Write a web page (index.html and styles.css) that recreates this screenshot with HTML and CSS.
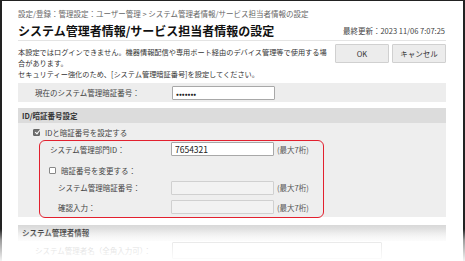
FILE: index.html
```html
<!DOCTYPE html>
<html lang="ja">
<head>
    <meta charset="UTF-8">
    <title>システム管理者情報/サービス担当者情報の設定</title>
    <link rel="stylesheet" href="styles.css">
</head>
<body>
    <div class="shot">
        <div class="frame">
            <div class="breadcrumb">設定/登録：管理設定：ユーザー管理 &gt; システム管理者情報/サービス担当者情報の設定</div>
            <div class="title-row">
                <h1>システム管理者情報/サービス担当者情報の設定</h1>
                <span class="updated">最終更新：2023 11/06 7:07:25</span>
            </div>
            <div class="intro">
                <p>本設定ではログインできません。機器情報配信や専用ポート経由のデバイス管理等で使用する場合があります。<br>セキュリティー強化のため、[システム管理暗証番号]を設定してください。</p>
                <div class="buttons">
                    <button>OK</button>
                    <button>キャンセル</button>
                </div>
            </div>

            <div class="current">
                <span class="lbl">現在のシステム管理暗証番号：</span>
                <input class="field" type="password" value="1234567">
            </div>

            <div class="section-head">ID/暗証番号設定</div>
            <div class="section-body">
                <label class="check"><span class="box checked"></span>IDと暗証番号を設定する</label>
                <div class="highlight">
                    <div class="row">
                        <span class="lbl">システム管理部門ID：</span>
                        <input class="field" type="text" value="7654321">
                        <span class="hint">(最大7桁)</span>
                    </div>
                    <label class="check inner"><span class="box"></span>暗証番号を変更する：</label>
                    <div class="row indent pin">
                        <span class="lbl">システム管理暗証番号：</span>
                        <input class="field" type="text" disabled>
                        <span class="hint">(最大7桁)</span>
                    </div>
                    <div class="row indent confirm">
                        <span class="lbl">確認入力：</span>
                        <input class="field" type="text" disabled>
                        <span class="hint">(最大7桁)</span>
                    </div>
                </div>
            </div>

            <div class="section-head grad">システム管理者情報</div>
            <div class="admin">
                <span class="lbl">システム管理者名（全角入力可）：</span>
                <input class="field wide" type="text">
            </div>
        </div>
        <!-- 下の方をぼかす -->
        <div class="fade"></div>
    </div>
</body>
</html>
```

FILE: styles.css
```css
* {
    box-sizing: border-box;
}

body {
    margin: 0;
    font-family: "Noto Sans CJK JP", "Noto Sans", sans-serif;
    color: #333;
    background: #fff;
}

.shot {
    position: relative;
    width: 465px;
    height: 261px;
    overflow: hidden;
}

.frame {
    width: 465px;
    height: 261px;
    border: 2px solid #222;
    border-top-width: 1px;
    border-bottom: none;
    padding: 7px 17px 0 16px;
}

.breadcrumb {
    font-size: 7.5px;
    color: #666;
    line-height: 12px;
    height: 12px;
    white-space: nowrap;
}

.title-row {
    display: flex;
    justify-content: space-between;
    align-items: center;
    height: 21px;
    border-bottom: 1px solid #e4e4e4;
    padding-top: 1px;
}

h1 {
    margin: 0;
    font-size: 12px;
    font-weight: bold;
    color: #111;
    white-space: nowrap;
}

.updated {
    font-size: 7.5px;
    color: #444;
    white-space: nowrap;
    padding-right: 1px;
}

.intro {
    display: flex;
    justify-content: space-between;
    padding-top: 3px;
    height: 39px;
}

.intro p {
    margin: 3px 0 0;
    width: 310px;
    font-size: 7.2px;
    line-height: 11px;
    color: #333;
}

.buttons {
    display: flex;
    gap: 3px;
}

button {
    width: 54px;
    height: 19px;
    background: #ececec;
    border: 1px solid #d0d0d0;
    border-radius: 1px;
    font-family: inherit;
    font-size: 7.5px;
    color: #333;
    padding: 0;
}

.current {
    display: flex;
    align-items: center;
    margin-top: 3px;
    height: 19px;
    background: #ededed;
    padding-left: 17px;
}

.lbl {
    font-size: 7.5px;
    color: #444;
    width: 137px;
    white-space: nowrap;
}

.field {
    width: 103px;
    height: 14px;
    border: 1px solid #a8a8a8;
    border-radius: 1px;
    background: #fff;
    font-family: inherit;
    font-size: 8.5px;
    padding: 0 3px;
    color: #222;
}

.field:disabled {
    background: #f2f2f2;
    border-color: #d0d0d0;
}

.section-head {
    margin-top: 6px;
    height: 15px;
    background: #dcdcdc;
    font-size: 7.5px;
    font-weight: bold;
    color: #333;
    line-height: 15px;
    padding-left: 4px;
}

.section-body {
    background: #eeeeee;
    padding: 3px 0 0 15px;
    height: 94px;
}

.check {
    display: flex;
    align-items: center;
    gap: 5px;
    font-size: 7.5px;
    color: #444;
    height: 12px;
}

.box {
    width: 7px;
    height: 7px;
    border: 1px solid #888;
    background: #fff;
    border-radius: 1px;
}

.box.checked {
    background: #707070;
    border-color: #666;
    position: relative;
}

.box.checked::after {
    content: "";
    position: absolute;
    left: 1.5px;
    top: -0.5px;
    width: 2px;
    height: 4px;
    border: solid #fff;
    border-width: 0 1px 1px 0;
    transform: rotate(40deg);
}

.highlight {
    margin: 2px 0 0 6px;
    width: 285px;
    height: 78px;
    border: 1.6px solid #e2202e;
    border-radius: 6px;
    padding: 1.5px 0 0 10px;
}

.row {
    display: flex;
    align-items: center;
    height: 13px;
}

.highlight .lbl {
    width: 121px;
}

.highlight .indent .lbl {
    width: 113px;
    margin-left: 8px;
}

.highlight .check {
    margin: 9px 0 0 -1px;
}

.highlight .pin {
    margin-top: 4px;
    height: 14px;
}

.highlight .confirm {
    margin-top: 6px;
}

.hint {
    font-size: 7.5px;
    color: #555;
    margin-left: 3px;
}

.section-head.grad {
    margin-top: 8px;
    height: 16px;
    background: linear-gradient(#d8d8d8, #efefef 70%, #f8f8f8);
}

.admin {
    display: flex;
    align-items: center;
    padding-left: 17px;
    height: 19px;
    margin-top: 0;
}

.admin .lbl {
    color: #999;
}

.field.wide {
    width: 210px;
    height: 17px;
    border-color: #ccc;
}

.fade {
    position: absolute;
    left: 0;
    right: 0;
    bottom: 0;
    height: 32px;
    background: linear-gradient(rgba(255,255,255,0), rgba(255,255,255,0.55) 35%, rgba(255,255,255,0.95));
}
```
